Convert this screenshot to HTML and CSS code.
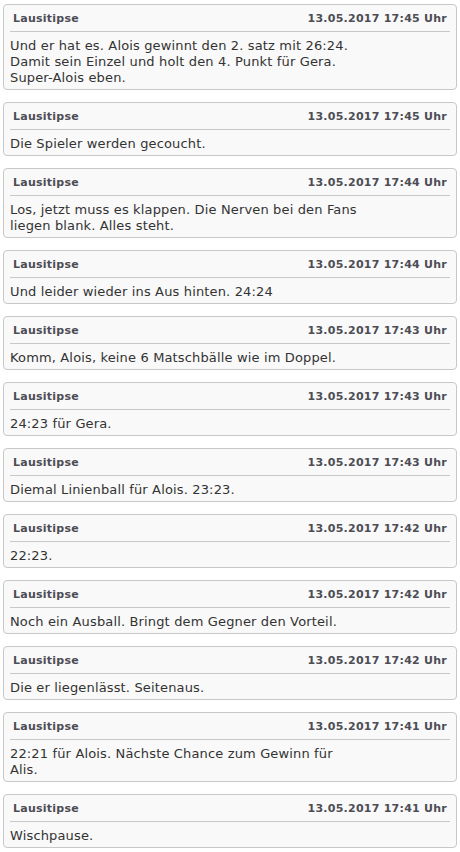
FILE: index.html
```html
<!DOCTYPE html>
<html lang="de">
<head>
    <meta charset="UTF-8">
    <meta name="viewport" content="width=device-width, initial-scale=1.0">
    <title>Liveticker</title>
    <link rel="stylesheet" href="styles.css">
</head>
<body>

    <!-- Ticker-Einträge -->
    <div class="ticker">
        <div class="entry">
            <div class="entry-head"><span class="author">Lausitipse</span><span class="date">13.05.2017 17:45 Uhr</span></div>
            <div class="entry-text">Und er hat es. Alois gewinnt den 2. satz mit 26:24.<br>Damit sein Einzel und holt den 4. Punkt für Gera.<br>Super-Alois eben.</div>
        </div>
        <div class="entry">
            <div class="entry-head"><span class="author">Lausitipse</span><span class="date">13.05.2017 17:45 Uhr</span></div>
            <div class="entry-text">Die Spieler werden gecoucht.</div>
        </div>
        <div class="entry">
            <div class="entry-head"><span class="author">Lausitipse</span><span class="date">13.05.2017 17:44 Uhr</span></div>
            <div class="entry-text">Los, jetzt muss es klappen. Die Nerven bei den Fans<br>liegen blank. Alles steht.</div>
        </div>
        <div class="entry">
            <div class="entry-head"><span class="author">Lausitipse</span><span class="date">13.05.2017 17:44 Uhr</span></div>
            <div class="entry-text">Und leider wieder ins Aus hinten. 24:24</div>
        </div>
        <div class="entry">
            <div class="entry-head"><span class="author">Lausitipse</span><span class="date">13.05.2017 17:43 Uhr</span></div>
            <div class="entry-text">Komm, Alois, keine 6 Matschbälle wie im Doppel.</div>
        </div>
        <div class="entry">
            <div class="entry-head"><span class="author">Lausitipse</span><span class="date">13.05.2017 17:43 Uhr</span></div>
            <div class="entry-text">24:23 für Gera.</div>
        </div>
        <div class="entry">
            <div class="entry-head"><span class="author">Lausitipse</span><span class="date">13.05.2017 17:43 Uhr</span></div>
            <div class="entry-text">Diemal Linienball für Alois. 23:23.</div>
        </div>
        <div class="entry">
            <div class="entry-head"><span class="author">Lausitipse</span><span class="date">13.05.2017 17:42 Uhr</span></div>
            <div class="entry-text">22:23.</div>
        </div>
        <div class="entry">
            <div class="entry-head"><span class="author">Lausitipse</span><span class="date">13.05.2017 17:42 Uhr</span></div>
            <div class="entry-text">Noch ein Ausball. Bringt dem Gegner den Vorteil.</div>
        </div>
        <div class="entry">
            <div class="entry-head"><span class="author">Lausitipse</span><span class="date">13.05.2017 17:42 Uhr</span></div>
            <div class="entry-text">Die er liegenlässt. Seitenaus.</div>
        </div>
        <div class="entry">
            <div class="entry-head"><span class="author">Lausitipse</span><span class="date">13.05.2017 17:41 Uhr</span></div>
            <div class="entry-text">22:21 für Alois. Nächste Chance zum Gewinn für<br>Alis.</div>
        </div>
        <div class="entry">
            <div class="entry-head"><span class="author">Lausitipse</span><span class="date">13.05.2017 17:41 Uhr</span></div>
            <div class="entry-text">Wischpause.</div>
        </div>
    </div>

</body>
</html>
```

FILE: styles.css
```css
body {
    margin: 0;
    padding: 4px 3px;
    background-color: #fff;
    font-family: 'DejaVu Sans', Verdana, sans-serif;
    color: #333;
}

.entry {
    background-color: #f9f9f9;
    border: 1px solid #c8c8c8;
    border-radius: 4px;
    padding: 0 6px 3px;
    margin-bottom: 12px;
}

.entry-head {
    display: flex;
    justify-content: space-between;
    padding: 7px 3px 5px;
    border-bottom: 1px solid #c8c8c8;
    font-size: 11px;
    font-weight: bold;
    line-height: 14px;
    letter-spacing: 0.25px;
    color: #4d4d55;
}

.entry-text {
    padding-top: 6px;
    font-size: 13px;
    line-height: 16px;
    letter-spacing: 0.15px;
}
```
